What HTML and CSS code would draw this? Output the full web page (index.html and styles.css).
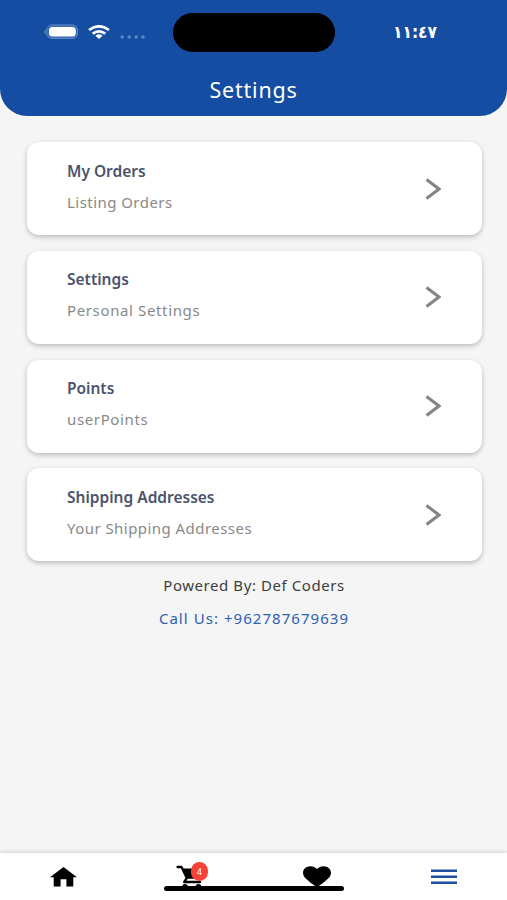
FILE: index.html
```html
<!DOCTYPE html>
<html lang="en">
<head>
<meta charset="utf-8">
<meta name="viewport" content="width=device-width, initial-scale=1">
<title>Settings</title>
<link rel="stylesheet" href="styles.css">
</head>
<body>
<div class="app">
  <header class="header">
    <div class="status">
      <div class="indicators">
        <svg class="battery" width="36" height="16" viewBox="0 0 36 16"><path d="M2.500 5.200Q-.4 8 2.500 10.800Z" fill="#5c86c4"/><rect x="3.600" y=".9" width="31" height="13.600" rx="5.500" fill="#3a6ab0" stroke="#5d88c4"/><rect x="6" y="3" width="26.800" height="9.600" rx="3.600" fill="#fff"/></svg>
        <svg class="wifi" width="22" height="14" viewBox="0 0 22 14" fill="none" stroke="#fff" stroke-width="2.700"><path d="M1 5Q11-2.400 21 5"/><path d="M4.700 8.700Q11 4.100 17.300 8.700"/><path d="M7.400 10.700Q11 7.900 14.600 10.700L11 13.900Z" fill="#fff" stroke="none"/></svg>
        <svg class="signal" width="26" height="4" viewBox="0 0 26 4" fill="#5c86c4"><circle cx="2.200" cy="2" r="1.800"/><circle cx="9.200" cy="2" r="1.800"/><circle cx="16.200" cy="2" r="1.800"/><circle cx="23" cy="2" r="1.800"/></svg>
      </div>
      <div class="island"></div>
      <div class="time">١١:٤٧</div>
    </div>
    <h1 class="title">Settings</h1>
  </header>
  <main class="content">
    <a class="card">
      <div class="text"><h2 class="name">My Orders</h2><p class="detail">Listing Orders</p></div>
      <svg class="chevron" width="16" height="22" viewBox="0 0 16 22"><path d="M1.500 1.500L14 11L1.500 20.500"/></svg>
    </a>
    <a class="card">
      <div class="text"><h2 class="name">Settings</h2><p class="detail wide">Personal Settings</p></div>
      <svg class="chevron" width="16" height="22" viewBox="0 0 16 22"><path d="M1.500 1.500L14 11L1.500 20.500"/></svg>
    </a>
    <a class="card">
      <div class="text"><h2 class="name">Points</h2><p class="detail wide">userPoints</p></div>
      <svg class="chevron" width="16" height="22" viewBox="0 0 16 22"><path d="M1.500 1.500L14 11L1.500 20.500"/></svg>
    </a>
    <a class="card">
      <div class="text"><h2 class="name">Shipping Addresses</h2><p class="detail">Your Shipping Addresses</p></div>
      <svg class="chevron" width="16" height="22" viewBox="0 0 16 22"><path d="M1.500 1.500L14 11L1.500 20.500"/></svg>
    </a>
    <p class="powered">Powered By: Def Coders</p>
    <p class="call">Call Us: +962787679639</p>
  </main>
  <nav class="nav">
    <a class="tab"><svg width="27" height="20" viewBox="0 0 27 20"><path d="M13.500 0L27 10.300H23.300V19.500H16.400V12.300H10.600V19.500H3.700V10.300H0Z"/></svg></a>
    <a class="tab"><svg width="28" height="24" viewBox="0 0 28 24"><path d="M1.500 2H5.500L10.800 13L8.200 17H24" fill="none" stroke="#000" stroke-width="2.300" stroke-linecap="round" stroke-linejoin="round"/><path d="M6 3.400H26L21.500 13.800H10.500Z"/><circle cx="9" cy="21.800" r="2.800"/><circle cx="22.500" cy="21.800" r="2.800"/></svg><span class="badge">4</span></a>
    <a class="tab"><svg width="28" height="22" viewBox="0 0 28 22"><path d="M14 21.500L11.500 19.600C4.500 14.300 0 11.300 0 6.800C0 3 3.200.2 7.500.2C10.100.2 12.500 1.300 14 3C15.500 1.300 17.900.2 20.500.2C24.800.2 28 3 28 6.800C28 11.300 23.500 14.300 16.500 19.600Z"/></svg></a>
    <a class="tab"><svg width="26" height="16" viewBox="0 0 26 16" fill="#1c51a3"><path d="M0 .6H26V3.100H0ZM0 6.600H26V9.100H0ZM0 12.400H26V14.900H0Z"/></svg></a>
    <div class="home-bar"></div>
  </nav>
</div>
</body>
</html>
```
FILE: styles.css
```css
* { box-sizing: border-box; }
body { margin: 0; font-family: "Noto Sans", "Open Sans", sans-serif; }
h1, h2, p { margin: 0; }
svg { display: block; }
.app { width: 507px; height: 900px; display: flex; flex-direction: column; background: #f5f5f5; overflow: hidden; }
.header { height: 116px; flex: none; background: #144da1; border-radius: 0 0 27px 27px; color: #fff; }
.status { height: 64px; display: grid; grid-template-columns: 173px 162px 172px; align-items: center; }
.indicators { display: flex; align-items: center; padding-left: 43px; }
.wifi { margin-left: 9px; }
.signal { margin: 10px 0 0 10px; }
.island { height: 39px; border-radius: 20px; background: #000; }
.time { padding: 0 0 1px 58px; font: bold 15.500px/24px "DejaVu Sans", sans-serif; transform: scaleY(1.12); letter-spacing: -.1px; }
.title { font-size: 21.500px; line-height: 30px; font-weight: 400; letter-spacing: .8px; text-align: center; padding-top: 11px; }
.content { flex: 1; display: flex; flex-direction: column; gap: 15.700px; padding: 26.200px 25.500px 0 26.500px; }
.card { flex: none; height: 93px; border-radius: 12px; background: #fff; box-shadow: 0 2px 5px rgba(0,0,0,.24); display: flex; align-items: center; justify-content: space-between; padding: 0 41px 0 40.500px; }
.text { display: flex; flex-direction: column; gap: 7px; margin-top: -5px; white-space: nowrap; }
.name { font-size: 15.500px; line-height: 24px; font-weight: 600; color: #4b536d; }
.detail { font-size: 15px; line-height: 24px; letter-spacing: .45px; color: #898989; }
.wide { letter-spacing: .63px; }
.chevron { fill: none; stroke: #858585; stroke-width: 3.100; }
.powered, .call { font-size: 15px; line-height: 24px; text-align: center; }
.powered { color: #3e3e3e; margin-top: -4px; letter-spacing: .57px; }
.call { color: #2c60b1; margin-top: -7px; letter-spacing: 1.050px; }
.nav { position: relative; height: 47px; flex: none; background: #fff; box-shadow: 0 -1px 4px rgba(0,0,0,.16); display: grid; grid-template-columns: repeat(4, 1fr); }
.tab { display: flex; align-items: center; justify-content: center; position: relative; }
.badge { position: absolute; left: 64px; top: 9px; width: 17px; height: 19px; border-radius: 8.500px; background: #f44336; color: #fff; font-size: 9px; line-height: 19px; text-align: center; }
.home-bar { position: absolute; left: 164px; top: 33px; width: 180px; height: 5px; border-radius: 3px; background: #000; }
```
